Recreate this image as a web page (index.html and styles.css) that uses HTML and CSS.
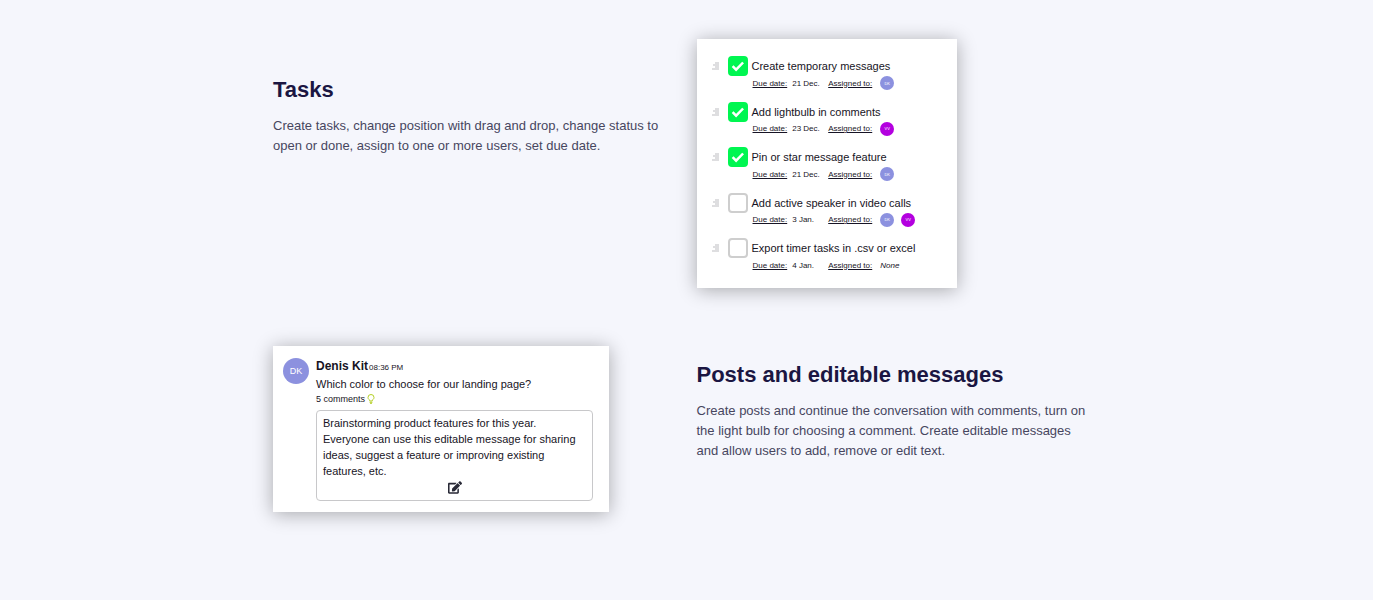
FILE: index.html
```html
<!DOCTYPE html>
<html lang="en">
<head>
<meta charset="utf-8">
<meta name="viewport" content="width=device-width, initial-scale=1">
<title>Tasks and posts</title>
<link rel="stylesheet" href="styles.css">
</head>
<body>
<svg class="sprite" aria-hidden="true">
  <symbol id="grip" viewBox="0 0 8 8"><path d="M3 1h4M1 3h6M3 5h4M0 7h7" fill="none" stroke="currentColor" stroke-width="1.300"/></symbol>
  <symbol id="check" viewBox="0 0 20 20"><path d="M4.600 10.200l3.500 3.500 7-7.200" fill="none" stroke="currentColor" stroke-width="2.500"/></symbol>
</svg>
<main class="features">
  <section class="feature">
    <div class="copy copy-tasks">
      <h2>Tasks</h2>
      <p>Create tasks, change position with drag and drop, change status to open or done, assign to one or more users, set due date.</p>
    </div>
    <div class="card tasks-card">
      <ul class="tasks">
        <li class="task">
          <svg class="grip"><use href="#grip"/></svg>
          <span class="tick"><input type="checkbox" id="t1" checked><svg><use href="#check"/></svg></span>
          <label for="t1">Create temporary messages</label>
          <div class="meta"><u>Due date:</u><span class="date">21 Dec.</span><u>Assigned to:</u><span class="people"><span class="avatar">DK</span></span></div>
        </li>
        <li class="task">
          <svg class="grip"><use href="#grip"/></svg>
          <span class="tick"><input type="checkbox" id="t2" checked><svg><use href="#check"/></svg></span>
          <label for="t2">Add lightbulb in comments</label>
          <div class="meta"><u>Due date:</u><span class="date">23 Dec.</span><u>Assigned to:</u><span class="people"><span class="avatar purple">VV</span></span></div>
        </li>
        <li class="task">
          <svg class="grip"><use href="#grip"/></svg>
          <span class="tick"><input type="checkbox" id="t3" checked><svg><use href="#check"/></svg></span>
          <label for="t3">Pin or star message feature</label>
          <div class="meta"><u>Due date:</u><span class="date">21 Dec.</span><u>Assigned to:</u><span class="people"><span class="avatar">DK</span></span></div>
        </li>
        <li class="task">
          <svg class="grip"><use href="#grip"/></svg>
          <span class="tick"><input type="checkbox" id="t4"><svg><use href="#check"/></svg></span>
          <label for="t4">Add active speaker in video calls</label>
          <div class="meta"><u>Due date:</u><span class="date">3 Jan.</span><u>Assigned to:</u><span class="people"><span class="avatar">DK</span><span class="avatar purple">VV</span></span></div>
        </li>
        <li class="task">
          <svg class="grip"><use href="#grip"/></svg>
          <span class="tick"><input type="checkbox" id="t5"><svg><use href="#check"/></svg></span>
          <label for="t5">Export timer tasks in .csv or excel</label>
          <div class="meta"><u>Due date:</u><span class="date">4 Jan.</span><u>Assigned to:</u><span class="people"><em>None</em></span></div>
        </li>
      </ul>
    </div>
  </section>
  <section class="feature">
    <article class="card post">
      <span class="avatar large">DK</span>
      <div class="post-body">
        <div class="byline"><strong>Denis Kit</strong><time>08:36 PM</time></div>
        <p class="question">Which color to choose for our landing page?</p>
        <div class="comments">5 comments
          <svg class="bulb" viewBox="0 0 8 10"><path d="M2.700 7V6.200C1.600 5.300 1 4.600 1 3.500a3 3 0 0 1 6 0C7 4.600 6.400 5.300 5.300 6.200V7zM2.600 8.300h2.800M3.200 9.500h1.600" fill="none" stroke="currentColor"/></svg>
        </div>
        <div class="note">
          <p>Brainstorming product features for this year.<br>Everyone can use this editable message for sharing ideas, suggest a feature or improving existing features, etc.</p>
          <button type="button" aria-label="Edit message">
            <svg viewBox="0 0 576 512"><path fill="currentColor" d="M402.600 83.200l90.200 90.200c3.800 3.800 3.800 10 0 13.800L274.400 405.600l-92.800 10.300c-12.400 1.400-22.900-9.100-21.500-21.500l10.300-92.800L388.800 83.200c3.800-3.800 10-3.800 13.800 0zm162-22.900l-48.800-48.800c-15.200-15.200-39.900-15.200-55.200 0l-35.400 35.400c-3.800 3.800-3.800 10 0 13.800l90.200 90.200c3.800 3.800 10 3.800 13.800 0l35.400-35.400c15.200-15.300 15.200-40 0-55.200zM384 346.200V448H64V128h229.800c3.200 0 6.200-1.300 8.500-3.500l40-40c7.600-7.600 2.200-20.500-8.500-20.500H48C21.500 64 0 85.500 0 112v352c0 26.500 21.500 48 48 48h352c26.500 0 48-21.500 48-48V306.200c0-10.700-12.900-16-20.500-8.500l-40 40c-2.200 2.300-3.500 5.300-3.500 8.500z"/></svg>
          </button>
        </div>
      </div>
    </article>
    <div class="copy">
      <h2>Posts and editable messages</h2>
      <p>Create posts and continue the conversation with comments, turn on the light bulb for choosing a comment. Create editable messages and allow users to add, remove or edit text.</p>
    </div>
  </section>
</main>
</body>
</html>
```
FILE: styles.css
```css
* { box-sizing: border-box; }
body {
  margin: 0;
  background: #f5f6fc;
  color: #171425;
  font-family: "Liberation Sans", Arial, sans-serif;
}
h2, p, ul { margin: 0; padding: 0; }
.sprite { display: none; }
.features {
  display: grid;
  gap: 58px;
  max-width: 827px;
  margin: 0 auto;
  padding: 39px 0 88px;
}
.feature {
  display: grid;
  grid-template-columns: 1fr 1fr;
  gap: 20px;
  align-items: start;
}
.copy { padding: 15px 12px 0 0; }
.copy-tasks { padding-top: 37px; }
.copy h2 {
  color: #1b1642;
  font-size: 22px;
  line-height: 28px;
}
.copy p {
  margin-top: 12px;
  color: #47465f;
  font-size: 13px;
  line-height: 20px;
}
.card {
  background: #fff;
  box-shadow: 0 2px 18px rgba(0, 0, 0, .32);
}
.tasks-card {
  width: 260px;
  padding: 17px 15px 16px;
}
.tasks {
  display: grid;
  align-content: space-between;
  min-height: 216px;
  list-style: none;
}
.task {
  display: grid;
  grid-template-columns: 8px 20px 1fr;
  column-gap: 8px;
  align-items: center;
}
.grip { width: 8px; height: 8px; color: #d3d3d6; }
.tick { display: grid; }
.tick input, .tick svg { grid-area: 1 / 1; width: 20px; height: 20px; }
.tick input {
  appearance: none;
  margin: 0;
  border: 2px solid #cecece;
  border-radius: 4px;
  background: #fff;
}
.tick input:checked { border-color: #00f651; background: #00f651; }
.tick svg { color: #fff; pointer-events: none; }
.task label { margin-left: -4px; font-size: 11px; line-height: 20px; }
.meta {
  grid-column: 3;
  display: flex;
  align-items: center;
  height: 14px;
  margin-left: -3px;
  font-size: 8px;
}
.date { width: 36px; margin-left: 5px; }
.people { display: flex; gap: 7px; margin-left: 8px; }
.avatar {
  display: grid;
  place-items: center;
  width: 14px;
  height: 14px;
  border-radius: 50%;
  background: #8c91df;
  color: #fff;
  font-size: 4px;
}
.purple { background: #b300df; }
.large { width: 26px; height: 26px; font-size: 9px; }
.post {
  display: grid;
  grid-template-columns: 26px 1fr;
  gap: 7px;
  width: 336px;
  padding: 12px 16px 11px 10px;
}
.byline { display: flex; align-items: baseline; gap: 1px; font-size: 12px; line-height: 16px; }
.byline time { font-size: 8px; }
.question { font-size: 11px; line-height: 16px; }
.comments {
  display: flex;
  align-items: center;
  gap: 2px;
  font-size: 9px;
  line-height: 14px;
}
.bulb { width: 8px; height: 10px; color: #b4cf25; }
.note {
  margin-top: 4px;
  padding: 4px 6px;
  border: 1px solid #c8c8ca;
  border-radius: 4px;
}
.note p { font-size: 11px; line-height: 16px; }
.note button {
  display: block;
  margin: 2px auto;
  padding: 0;
  border: 0;
  background: none;
  color: #282936;
}
.note button svg { display: block; width: 14px; height: 13px; }
```
